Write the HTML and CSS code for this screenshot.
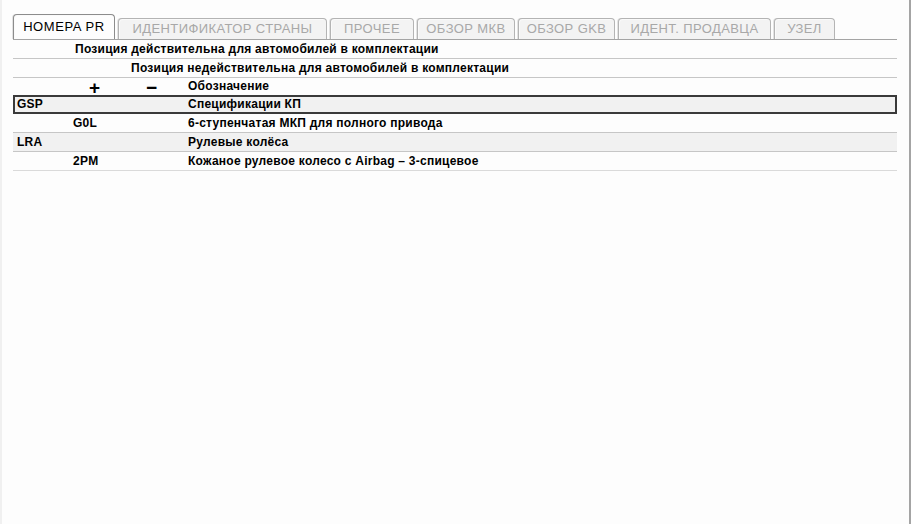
FILE: index.html
```html
<!DOCTYPE html>
<html lang="ru">
<head>
<meta charset="utf-8">
<title>Номера PR</title>
<link rel="stylesheet" href="styles.css">
</head>
<body>
<div class="frame">
  <div class="tabs">
    <div class="tab active t-pr">HOMEPA PR</div>
    <div class="tab t-country">ИДЕНТИФИКАТОР СТРАНЫ</div>
    <div class="tab t-other">ПРОЧЕЕ</div>
    <div class="tab t-mkb">ОБЗОР МКВ</div>
    <div class="tab t-gkb">ОБЗОР GKB</div>
    <div class="tab t-seller">ИДЕНТ. ПРОДАВЦА</div>
    <div class="tab t-node">УЗЕЛ</div>
  </div>
  <div class="table">
    <div class="row line">
      <div class="cell"></div>
      <div class="cell span3">Позиция действительна для автомобилей в комплектации</div>
    </div>
    <div class="row line">
      <div class="cell"></div>
      <div class="cell"></div>
      <div class="cell span2">Позиция недействительна для автомобилей в комплектации</div>
    </div>
    <div class="row head">
      <div class="cell"></div>
      <div class="cell sign">+</div>
      <div class="cell sign minus">&minus;</div>
      <div class="cell">Обозначение</div>
    </div>
    <div class="row group selected">
      <div class="cell">GSP</div>
      <div class="cell"></div>
      <div class="cell"></div>
      <div class="cell">Спецификации КП</div>
    </div>
    <div class="row line">
      <div class="cell"></div>
      <div class="cell">G0L</div>
      <div class="cell"></div>
      <div class="cell">6-ступенчатая МКП для полного привода</div>
    </div>
    <div class="row group line">
      <div class="cell">LRA</div>
      <div class="cell"></div>
      <div class="cell"></div>
      <div class="cell">Рулевые колёса</div>
    </div>
    <div class="row line light">
      <div class="cell"></div>
      <div class="cell">2PM</div>
      <div class="cell"></div>
      <div class="cell">Кожаное рулевое колесо с Airbag – 3-спицевое</div>
    </div>
  </div>
</div>
</body>
</html>
```
FILE: styles.css
```css
html, body {
  margin: 0;
  padding: 0;
  background: #fdfdfd;
}

.frame {
  box-sizing: border-box;
  width: 911px;
  height: 524px;
  border-left: 2px solid #f0f0f0;
  border-right: 2px solid #a4a4a4;
  padding: 14px 12px 0 11px;
  font-family: "Liberation Sans", Arial, sans-serif;
}

.tabs {
  display: flex;
  align-items: flex-end;
  gap: 3px;
  height: 25px;
  border-bottom: 1px solid #a4a4a4;
}

.tab {
  box-sizing: border-box;
  height: 21px;
  border: 1px solid #b4b4b4;
  border-bottom: none;
  border-radius: 4px 4px 0 0;
  box-shadow: inset 1px 1px 0 #fafafa, -1px 0 0 #e2e2e2;
  background: #f3f3f3;
  color: #a8a8a8;
  font-size: 13px;
  line-height: 20px;
  letter-spacing: 0.4px;
  text-align: center;
  white-space: nowrap;
}

.tab.active {
  height: 25px;
  background: #fdfdfd;
  color: #000;
  border-color: #8c8c8c;
  line-height: 24px;
  letter-spacing: 0.6px;
}

.t-pr { width: 102px; }
.t-country { width: 209px; }
.t-other { width: 84px; }
.t-mkb { width: 98px; }
.t-gkb { width: 97px; }
.t-seller { width: 153px; }
.t-node { width: 61px; }

.table {
  font-size: 12px;
  font-weight: bold;
  letter-spacing: 0.25px;
  color: #000;
}

.row {
  display: grid;
  grid-template-columns: 56px 58px 57px 1fr;
  height: 19px;
  box-sizing: border-box;
  line-height: 18px;
}

.row.line {
  border-bottom: 1px solid #c6c6c6;
}

.row.light {
  border-bottom-color: #dadada;
}

.row.head {
  height: 17px;
  line-height: 17px;
}

.row.group {
  background: #f1f1f1;
}

.row.selected {
  box-shadow: inset 0 0 0 2px #3a3a3a;
}

.cell {
  padding-left: 4px;
  white-space: nowrap;
}

.span3 {
  grid-column: span 3;
  padding-left: 6px;
}

.span2 {
  grid-column: span 2;
}

.sign {
  padding-left: 20px;
  font-size: 19px;
  line-height: 19px;
}

.sign.minus {
  padding-left: 19px;
}
```
